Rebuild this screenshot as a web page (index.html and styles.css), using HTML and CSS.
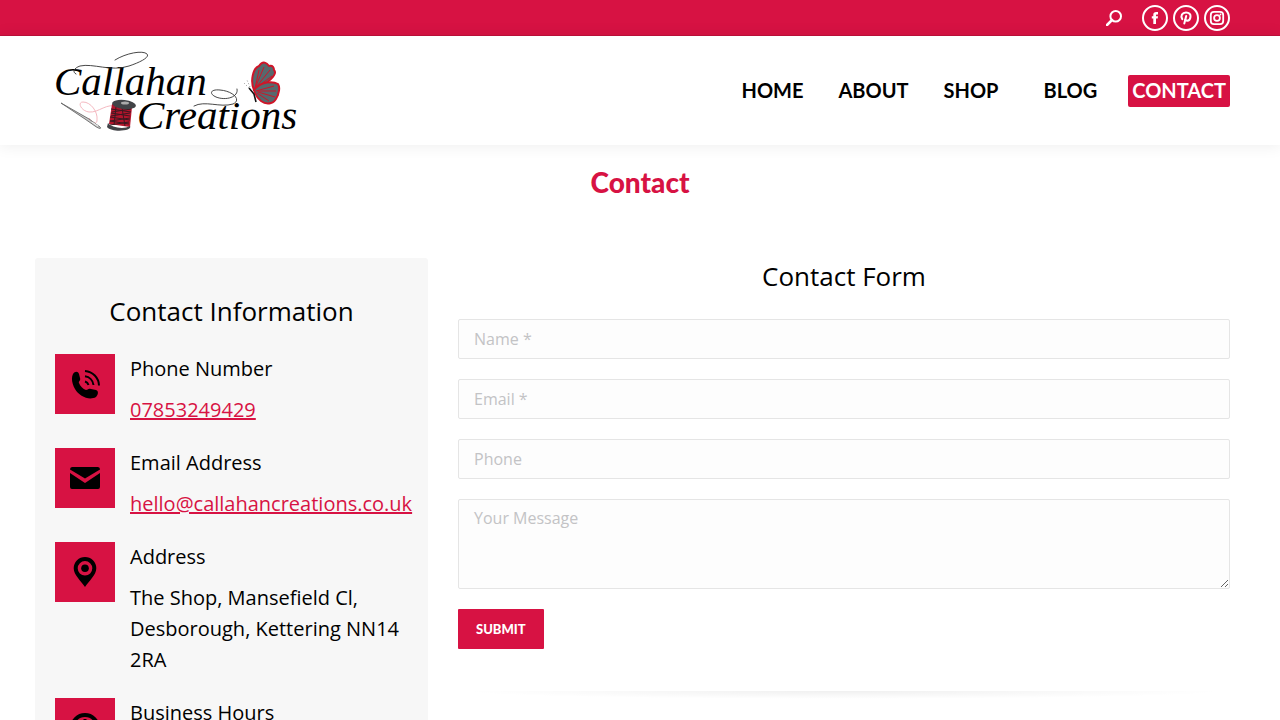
FILE: index.html
```
<!DOCTYPE html>
<html lang="en">
<head>
	<meta charset="utf-8">
	<meta name="viewport" content="width=device-width, initial-scale=1">
	<title>Contact - Callahan Creations</title>
	<link rel="stylesheet" href="styles.css">
</head>
<body>

	<div class="top-bar">
		<a href="#search" class="search" aria-label="Search">
			<svg width="16" height="16" viewBox="0 0 16 16" fill="none" stroke="#fff" stroke-width="2">
				<circle cx="9.700" cy="6.300" r="5.300"/>
				<path d="M6 10L1 15" stroke-width="2.500" stroke-linecap="round"/>
			</svg>
		</a>
		<div class="social">
			<a href="#facebook" aria-label="Facebook">
				<svg width="22" height="22" viewBox="0 0 22 22" fill="#fff">
					<path d="M9.300 17V11.600H7.800V9.200h1.500V7.800C9.300 5.900 10.300 5 12.200 5H14v2.500h-1.100c-.7 0-.9.3-.9.8v.9h2l-.3 2.400H12V17z"/>
				</svg>
			</a>
			<a href="#pinterest" aria-label="Pinterest">
				<svg width="22" height="22" viewBox="0 0 22 22" fill="none" stroke="#fff" stroke-width="2" stroke-linecap="round">
					<path d="M7.300 12.100C5.200 9 7.200 5.400 11 5.400c3.200 0 4.900 2 4.500 4.500-.3 2.500-1.800 3.900-3.500 3.800-.9 0-1.500-.5-1.700-1.100"/>
					<path d="M11.200 9L9.300 16.600"/>
				</svg>
			</a>
			<a href="#instagram" aria-label="Instagram">
				<svg width="22" height="22" viewBox="0 0 22 22" fill="none" stroke="#fff" stroke-width="1.800">
					<rect x="4.800" y="4.800" width="12.400" height="12.400" rx="3.200"/>
					<circle cx="11" cy="11" r="2.900"/>
					<circle cx="14.500" cy="7.500" r=".9" fill="#fff" stroke="none"/>
				</svg>
			</a>
		</div>
	</div>

	<header class="header">
		<a href="#home" class="logo" aria-label="Callahan Creations">
			<svg width="250" height="90" viewBox="0 0 250 90" fill="none">
				<text x="4" y="49" class="logo-text">Callahan</text>
				<text x="87" y="83" class="logo-text">Creations</text>
				<!-- flourishes -->
				<g stroke="#333" stroke-width=".9" stroke-linecap="round">
					<path d="M26 28C22 26 24 22 30 20C43 17 61 26 79 20C91 16 100 11 97 8C93 4 76 7 65 14"/>
					<path d="M144 60C155 54 170 62 183 58C192 54 183 45 170 44C160 43 159 48 166 51C176 55 189 51 187 43"/>
				</g>
				<!-- needle and thread -->
				<path d="M68 61C57 56 49 67 39 66C31 65 27 56 33 56C41 56 48 66 47 74C47 79 43 77 39 72" stroke="#f5b9c1" stroke-width="1"/>
				<path d="M11 57L39 73L50 81C52 83 49 83 45 80L35 73Z" stroke="#666" stroke-width=".9" fill="#ccc"/>
				<path d="M42 76L48 80" stroke="#fff" stroke-width=".8"/>
				<!-- spool -->
				<path d="M62 58L82 61L80 81L59 78Z" fill="#b3142c"/>
				<path d="M61 63L81 66M61 67L80 70M60 71L80 74M60 75L79 78M62 66L81 63M61 70L80 67M60 75L80 72M60 79L79 76M66 61L64 79M72 62L75 80" stroke="#3b1820" stroke-width="1"/>
				<ellipse cx="74" cy="58.500" rx="12" ry="4.500" transform="rotate(6 74 58.500)" fill="#414347"/>
				<ellipse cx="75" cy="57" rx="4" ry="1.500" fill="#aaa"/>
				<path d="M58 77C61 81 73 84 80 80C83 85 62 87 57 81Z" fill="#414347"/>
				<!-- butterfly -->
				<g stroke="#cf1528" stroke-width="2" stroke-linejoin="round" fill="#56696d">
					<path d="M204 44C200 35 203 22 209 20C213 14 217 17 219 20C223 19 224 22 224 24C228 28 219 37 204 44Z"/>
					<path d="M204 44C211 35 223 35 228 38C231 43 228 46 228 49C226 52 226 56 221 57C214 59 207 54 204 44Z"/>
					<path d="M205 42L209 24M205 42L214 21M206 41L220 24M207 41L222 30M206 45L224 40M207 45L226 45M208 46L225 51M207 47L219 55" stroke-width="1" fill="none"/>
				</g>
				<path d="M199 42L204 48L206 56" stroke="#111" stroke-width="1.600"/>
				<path d="M199 42L194 37M200 41L197 34" stroke="#777" stroke-width=".8" stroke-dasharray="1 2"/>
			</svg>
		</a>
		<nav class="nav">
			<a href="#home">HOME</a>
			<a href="#about">ABOUT</a>
			<a href="#shop" class="has-menu">SHOP</a>
			<a href="#blog">BLOG</a>
			<a href="#contact" class="active">CONTACT</a>
		</nav>
	</header>

	<h1 class="page-title">Contact</h1>

	<main class="content">
		<aside class="info">
			<h2>Contact Information</h2>

			<div class="info-item">
				<div class="icon">
					<svg width="30" height="30" viewBox="0 0 30 30">
						<path d="M3 5C5 2 8 2 9 5L10 9C11 12 8 12 9 14C10 17 13 20 16 21C18 21 18 19 21 20L26 21C29 22 28 26 26 28C19 32 9 27 5 20C2 15 1 9 3 5Z"/>
						<path d="M15 12.500A5 5 0 0 1 18.500 16M15 7.300A10 10 0 0 1 23.500 16M15 2A15 15 0 0 1 29 16.500" fill="none" stroke="#000" stroke-width="2"/>
					</svg>
				</div>
				<div class="text">
					<h3>Phone Number</h3>
					<p><a href="tel:07853249429">07853249429</a></p>
				</div>
			</div>

			<div class="info-item">
				<div class="icon">
					<svg width="30" height="30" viewBox="0 0 30 30">
						<path d="M0 6.500Q0 4 2 4H28Q30 4 30 6.500L15 15.500Z"/>
						<path d="M0 10L15 20L30 10V24Q30 26 28 26H2Q0 26 0 24Z"/>
					</svg>
				</div>
				<div class="text">
					<h3>Email Address</h3>
					<p><a href="mailto:hello@callahancreations.co.uk">hello@callahancreations.co.uk</a></p>
				</div>
			</div>

			<div class="info-item">
				<div class="icon">
					<svg width="30" height="30" viewBox="0 0 30 30">
						<path fill-rule="evenodd" d="M15 0A11.300 11.300 0 0 1 26.300 11.300C26.300 18 19 24 15 30C11 24 3.700 18 3.700 11.300A11.300 11.300 0 0 1 15 0ZM15 4A7.300 7.300 0 1 0 15 18.600A7.300 7.300 0 1 0 15 4Z"/>
						<circle cx="15" cy="11.300" r="3.800"/>
					</svg>
				</div>
				<div class="text">
					<h3>Address</h3>
					<p>The Shop, Mansefield Cl, Desborough, Kettering NN14 2RA</p>
				</div>
			</div>

			<div class="info-item">
				<div class="icon">
					<svg width="30" height="30" viewBox="0 0 30 30" fill="none" stroke="#000" stroke-width="4">
						<circle cx="15" cy="15" r="13"/>
						<path d="M15 6V15L20 20" stroke-width="3"/>
					</svg>
				</div>
				<div class="text">
					<h3>Business Hours</h3>
				</div>
			</div>
		</aside>

		<section class="form-col">
			<h2>Contact Form</h2>
			<form class="contact-form">
				<input type="text" name="name" placeholder="Name *" aria-label="Name">
				<input type="email" name="email" placeholder="Email *" aria-label="Email">
				<input type="tel" name="phone" placeholder="Phone" aria-label="Phone">
				<textarea name="message" placeholder="Your Message" aria-label="Your Message"></textarea>
				<button type="submit">SUBMIT</button>
			</form>
			<div class="divider"></div>
		</section>
	</main>

</body>
</html>
```
FILE: styles.css
```
* {
	box-sizing: border-box;
}
body {
	margin: 0;
	font: 20px/31px "Open Sans", sans-serif;
	color: #000;
	background-color: #fff;
}
h1, h2, h3, p {
	margin: 0;
	font-weight: 400;
}
svg {
	display: block;
}

/* top bar */
.top-bar {
	display: flex;
	justify-content: flex-end;
	align-items: center;
	gap: 20px;
	height: 36px;
	padding: 0 50px;
	background-color: #d71243;
	border-bottom: 1px solid #bf103b;
}
.social {
	display: flex;
	gap: 5px;
}
.social a {
	width: 26px;
	height: 26px;
	border: 2px solid #fff;
	border-radius: 50%;
}

/* header */
.header {
	display: flex;
	justify-content: space-between;
	align-items: center;
	min-height: 109px;
	padding: 0 50px;
	box-shadow: 0 0 15px 1px rgba(0, 0, 0, 0.07);
}
.logo-text {
	font: italic 41px "Liberation Serif", serif;
	fill: #000;
}
.nav {
	display: flex;
	gap: 27px;
}
.nav a {
	padding: 0 4px 2px;
	font: 700 20px/30px Lato, sans-serif;
	color: #000;
	text-decoration: none;
}
.nav .has-menu {
	padding-right: 14px;
}
.nav .active {
	color: #fff;
	background-color: #d71243;
	border-radius: 2px;
}

.page-title {
	padding: 20px 50px 59px;
	font: 900 28px/34px Lato, sans-serif;
	color: #d71243;
	text-align: center;
}

/* content */
.content {
	display: grid;
	grid-template-columns: minmax(0, 28fr) minmax(0, 55fr);
	gap: 30px;
	padding: 0 50px 50px 35px;
}
.content h2 {
	margin-bottom: 25px;
	font-size: 26px;
	line-height: 36px;
	text-align: center;
}
.info {
	padding: 35px 20px;
	background-color: #f7f7f7;
	border-radius: 3px;
}
.info-item {
	display: flex;
	gap: 15px;
	margin-bottom: 23px;
}
.info-item h3 {
	margin-bottom: 10px;
	font-size: 20px;
	line-height: 30px;
}
.info-item a {
	color: #d71243;
}
.icon {
	display: flex;
	justify-content: center;
	align-items: center;
	flex: none;
	width: 60px;
	height: 60px;
	background-color: #d71243;
}

/* form */
.contact-form {
	display: flex;
	flex-direction: column;
	align-items: flex-start;
	gap: 20px;
}
.contact-form input,
.contact-form textarea {
	width: 100%;
	height: 40px;
	padding: 5px 15px;
	font: 16px/26px "Open Sans", sans-serif;
	background-color: #fdfdfd;
	border: 1px solid #e5e5e5;
	border-radius: 2px;
}
.contact-form textarea {
	height: 90px;
	resize: vertical;
}
.contact-form ::placeholder {
	color: #c3c3c5;
	opacity: 1;
}
.contact-form button {
	height: 40px;
	padding: 0 18px;
	font: 900 13px/20px Lato, sans-serif;
	color: #fff;
	background-color: #d71243;
	border: 0;
	border-radius: 1px;
}
.divider {
	height: 8px;
	margin-top: 42px;
	background: radial-gradient(ellipse at 50% 0, rgba(0, 0, 0, 0.06), transparent 70%);
}

@media (max-width: 800px) {
	.header {
		flex-direction: column;
		gap: 10px;
		padding: 10px;
	}
	.nav {
		flex-wrap: wrap;
		justify-content: center;
		gap: 10px;
	}
	.content {
		grid-template-columns: minmax(0, 1fr);
		padding: 0 20px 40px;
	}
}
```
